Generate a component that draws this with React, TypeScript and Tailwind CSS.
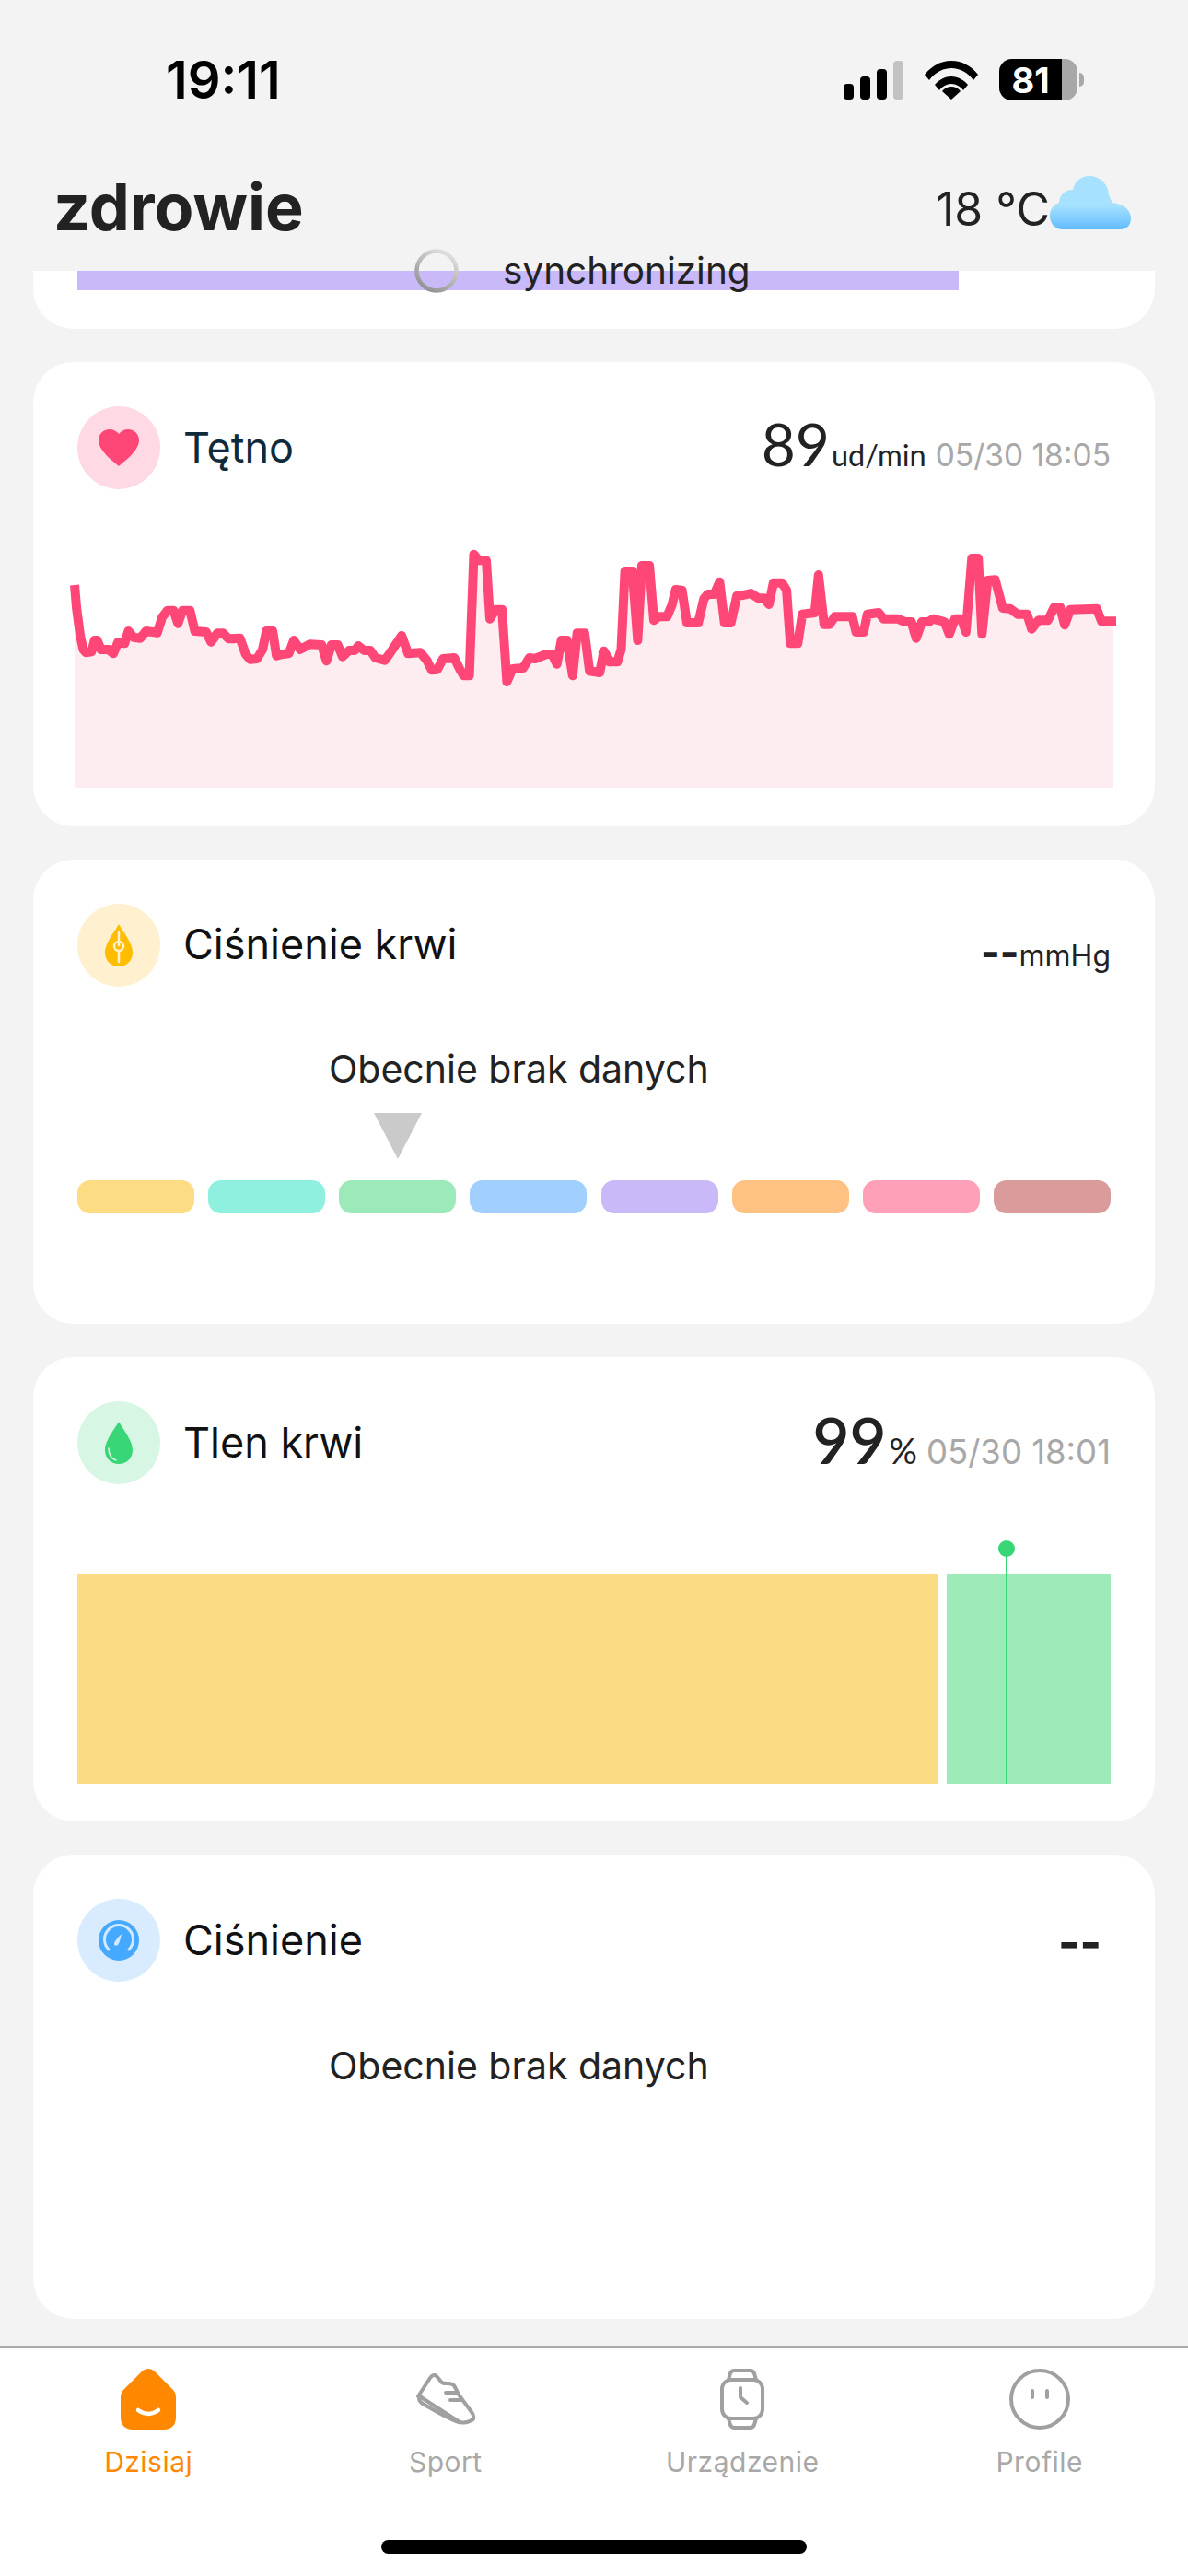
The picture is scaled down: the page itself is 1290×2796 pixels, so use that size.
import type { ReactNode } from "react";

// traced from the reference: left half, then right half of the heart rate line
const leftLine = [
  [125, 705], [130, 780], [140, 870], [148, 915], [155, 925], [170, 922], [178, 885], [185, 885], [195, 915], [215, 915],
  [228, 928], [240, 892], [258, 895], [268, 855], [282, 875], [300, 878], [315, 855], [345, 860], [358, 810], [372, 788],
  [388, 788], [400, 830], [412, 788], [432, 788], [445, 855], [475, 858], [488, 890], [505, 862], [520, 862], [535, 880],
  [565, 878], [580, 930], [592, 947], [610, 945], [625, 915], [635, 855], [652, 855], [662, 935], [680, 930], [695, 928],
  [708, 885], [725, 915], [750, 898], [782, 900], [795, 952], [808, 900], [825, 900], [838, 938], [855, 918], [870, 918],
  [880, 903], [895, 918], [912, 918], [925, 942], [950, 950], [965, 925], [995, 870], [1012, 928], [1045, 925], [1062, 950],
  [1075, 982], [1090, 980], [1105, 945], [1135, 942], [1150, 980], [1160, 1000], [1175, 1000], [1187, 605], [1200, 625],
  [1220, 625], [1230, 815], [1245, 785], [1262, 785], [1275, 1020], [1290, 978], [1318, 975], [1335, 942], [1350, 945],
  [1380, 930], [1395, 930], [1408, 962], [1420, 885], [1435, 885], [1450, 1000], [1462, 862], [1482, 862], [1495, 985],
  [1522, 990], [1533, 920], [1550, 955],
];
const rightLine = [
  [12, 925], [28, 955], [50, 955], [60, 915], [70, 660], [90, 660], [104, 885], [115, 642], [135, 642], [147, 820],
  [160, 808], [182, 808], [195, 770], [205, 720], [222, 722], [235, 828], [265, 828], [280, 750], [290, 735], [308, 735],
  [322, 695], [335, 828], [352, 828], [368, 740], [385, 738], [405, 732], [425, 748], [440, 748], [453, 768], [465, 698],
  [488, 698], [500, 722], [510, 895], [530, 895], [542, 800], [575, 795], [585, 672], [600, 833], [615, 833], [628, 808],
  [675, 808], [685, 858], [705, 858], [715, 800], [745, 795], [758, 815], [795, 815], [815, 825], [832, 825], [845, 878],
  [860, 825], [878, 825], [890, 815], [920, 825], [933, 865], [948, 815], [965, 815], [977, 858], [993, 618], [1010, 618],
  [1020, 865], [1035, 690], [1055, 688], [1075, 780], [1095, 782], [1115, 800], [1140, 800], [1152, 848], [1170, 820],
  [1195, 820], [1212, 778], [1228, 778], [1240, 835], [1255, 785], [1325, 782], [1338, 823], [1377, 823],
];

const linePoints = [
  ...leftLine.map(([x, y]) => [30 + x / 2.45 - 72, 400 + y / 3 - 590]),
  ...rightLine.map(([x, y]) => [650 + x / 2.45 - 72, 400 + y / 3 - 590]),
];
const lineAttr = linePoints.map(([x, y]) => `${x.toFixed(1)},${y.toFixed(1)}`).join(" ");
const fillAttr = `9,265 ${linePoints.map(([x, y]) => `${Math.min(x, 1137).toFixed(1)},${y.toFixed(1)}`).join(" ")} 1137,265`;

const pills = ["bg-[#fddc84]", "bg-[#90f0e0]", "bg-[#9ce9b9]", "bg-[#a1d0ff]", "bg-[#c9b9f9]", "bg-[#ffc282]", "bg-[#ffa0b9]", "bg-[#da9b9b]"];

function CardHead({ circle, icon, title, titleClass, children }: { circle: string; icon: ReactNode; title: string; titleClass?: string; children: ReactNode }) {
  return (
    <div className="flex h-[90px] items-start justify-between">
      <div className="flex h-[90px] items-center gap-[25px]">
        <div className={`flex h-[90px] w-[90px] items-center justify-center rounded-full ${circle}`}>{icon}</div>
        <span className={`text-[45px] ${titleClass ?? "text-[#111]"}`}>{title}</span>
      </div>
      {children}
    </div>
  );
}

function Card({ children }: { children: ReactNode }) {
  return <div className="h-[504px] shrink-0 rounded-[44px] bg-white px-12 pt-12">{children}</div>;
}

function NoData({ className }: { className: string }) {
  return <p className={`pl-[273px] text-[41px] leading-[50px] text-[#222] ${className}`}>Obecnie brak danych</p>;
}

function StatusIcons() {
  return (
    <div className="flex items-center">
      <svg width="66" height="42" viewBox="0 0 66 42" className="mt-[1px]">
        <rect x="0" y="25" width="11" height="17" rx="4" fill="#000" />
        <rect x="18" y="17" width="11" height="25" rx="4" fill="#000" />
        <rect x="36" y="9" width="11" height="33" rx="4" fill="#000" />
        <rect x="54" y="0" width="11" height="42" rx="4" fill="#c2c2c2" />
      </svg>
      <svg width="58" height="42" viewBox="0 0 58 42" className="ml-[22px]">
        <path d="M0 15C7 6 17 0 29 0s22 6 29 15l-5 6C47 13 38.500 8 29 8S11 13 5 21z" fill="#000" />
        <path d="M11 26c4-5 11-9 18-9s14 4 18 9l-5 6c-3-4-8-7-13-7s-10 3-13 7z" fill="#000" />
        <path d="M19 33c2-3 6-5 10-5s8 2 10 5L29 42z" fill="#000" />
      </svg>
      <div className="relative ml-[23px] flex h-[45px] w-[85px] overflow-hidden rounded-[14px] bg-[#a8a8a8]">
        <div className="flex w-[68px] items-center justify-center bg-black text-[38px] font-bold leading-none text-white">81</div>
      </div>
      <div className="ml-[2px] h-[15px] w-[5px] rounded-r-full bg-[#a8a8a8]" />
    </div>
  );
}

function Cloud() {
  return (
    <svg width="88" height="58" viewBox="0 0 88 58">
      <defs>
        <linearGradient id="cloud" x1="0" y1="0" x2="0" y2="1">
          <stop offset="0.55" stopColor="#a6e2ff" />
          <stop offset="1" stopColor="#62bbff" />
        </linearGradient>
      </defs>
      <path d="M14 58C5 58 0 51 0 43c0-7 4-12 10-14 0-7 5-14 15-14 2-9 9-15 18-15 11 0 20 8 21 20 2 6 3 7 4 9 9 1 20 6 20 17 0 7-4 12-12 12z" fill="url(#cloud)" />
    </svg>
  );
}

function Heart() {
  return (
    <svg width="44" height="40" viewBox="0 0 44 40">
      <path d="M22 40C19 37 0 24 0 12 0 5 5 0 12 0c4 0 8 2 10 5 2-3 6-5 10-5 7 0 12 5 12 12 0 12-19 25-22 28z" fill="#ff4777" />
    </svg>
  );
}

function PressureDrop() {
  return (
    <svg width="30" height="46" viewBox="0 0 30 46">
      <path d="M15 0c3 6 15 20 15 31 0 9-7 15-15 15S0 40 0 31C0 20 12 6 15 0z" fill="#ffbd00" />
      <path d="M15 9v14M15 30v11" stroke="#fff0cf" strokeWidth="2.500" strokeLinecap="round" />
      <circle cx="15" cy="24" r="5" fill="none" stroke="#fff0cf" strokeWidth="2.500" />
    </svg>
  );
}

function OxygenDrop() {
  return (
    <svg width="30" height="46" viewBox="0 0 30 46">
      <path d="M15 0c3 6 15 20 15 31 0 9-7 15-15 15S0 40 0 31C0 20 12 6 15 0z" fill="#38d677" />
      <path d="M4 29c0 6 3 11 8 13" fill="none" stroke="#d9f6e5" strokeWidth="1.500" strokeLinecap="round" />
    </svg>
  );
}

function Gauge() {
  return (
    <svg width="44" height="44" viewBox="0 0 44 44">
      <circle cx="22" cy="22" r="22" fill="#45a9ff" />
      <path d="M11 32A15.500 15.500 0 1 1 33 32" fill="none" stroke="#d3e9ff" strokeWidth="3" strokeLinecap="round" />
      <path d="M17 26c0-3 5-8 8-11-1 4-2 10-4 12-2 1-4 1-4-1z" fill="#d3e9ff" />
    </svg>
  );
}

function HomeIcon() {
  return (
    <svg width="60" height="66" viewBox="0 0 60 66">
      <path d="M23 3c4-4 10-4 14 0l19 19c3 3 4 5 4 9v22c0 8-5 13-13 13H13C5 66 0 61 0 53V31c0-4 1-6 4-9z" fill="#ff8800" />
      <path d="M19 45c7 5 15 5 22 0" fill="none" stroke="#fff" strokeWidth="4.500" strokeLinecap="round" />
    </svg>
  );
}

function ShoeIcon() {
  return (
    <svg width="66" height="57" viewBox="0 0 66 57" fill="none" stroke="#a0a0a0" strokeWidth="4" strokeLinecap="round" strokeLinejoin="round">
      <path d="M3 25 16 5c2-3 5-4 7-2l5 6c1 2 3 2 7 2 5 0 7 1 8 4l4 8 14 19c3 4 3 8 0 9-5 3-11 3-17 1-12-5-24-12-36-19-3-2-5-5-3-8z" />
      <path d="M5 25c13 9 28 18 43 28" />
      <path d="M33 21h12M38 29h12" />
    </svg>
  );
}

function WatchIcon() {
  return (
    <svg width="48" height="66" viewBox="0 0 48 66" fill="none" stroke="#a0a0a0" strokeWidth="4" strokeLinecap="round" strokeLinejoin="round">
      <rect x="2" y="12" width="44" height="42" rx="10" />
      <path d="M9 12l2-7c1-2 2-3 4-3h18c2 0 3 1 4 3l2 7M9 54l2 7c1 2 2 3 4 3h18c2 0 3-1 4-3l2-7" />
      <path d="M22 21v10l7 6" />
    </svg>
  );
}

function FaceIcon() {
  return (
    <svg width="66" height="66" viewBox="0 0 66 66" fill="none" stroke="#a0a0a0" strokeLinecap="round">
      <circle cx="33" cy="33" r="31" strokeWidth="4" />
      <path d="M25 24v7M41 24v7" strokeWidth="4" />
    </svg>
  );
}

function Tab({ icon, label, active }: { icon: ReactNode; label: string; active?: boolean }) {
  return (
    <div className="flex flex-col items-center">
      <div className="flex h-[66px] items-center">{icon}</div>
      <span className={`mt-[17px] text-[30px] leading-[36px] tracking-[0.5px] ${active ? "text-[#ff8800]" : "text-[#a8a8a8]"}`}>{label}</span>
    </div>
  );
}

export default function App() {
  return (
    <div className="relative flex h-[2796px] w-[1290px] flex-col overflow-hidden bg-[#f3f3f3] font-['Inter',sans-serif]">
      <div className="flex h-[180px] shrink-0 items-start justify-between pt-[64px] pl-[180px] pr-[113px]">
        <span className="text-[56px] font-semibold leading-[46px] text-black">19:11</span>
        <StatusIcons />
      </div>

      <div className="flex h-[114px] shrink-0 items-start justify-between pl-[58px] pr-[62px]">
        <h1 className="mt-[5px] text-[70px] font-bold leading-[80px] text-[#222]">zdrowie</h1>
        <div className="mt-[11px] flex items-start">
          <span className="mt-[6px] text-[50px] leading-[60px] text-[#222]">18 °C</span>
          <Cloud />
        </div>
      </div>

      <div className="relative flex flex-1 flex-col gap-9 px-9">
        <div className="h-[63px] shrink-0 rounded-b-[44px] bg-white px-12">
          <div className="h-[21px] w-[957px] bg-[#c9b9f9]" />
        </div>

        <Card>
          <CardHead circle="bg-[#ffd9e3]" icon={<Heart />} title="Tętno" titleClass="text-[#0f2a3a]">
            <div className="mt-[6px] flex items-baseline font-['Lato',sans-serif]">
              <span className="text-[64px] leading-[70px] text-[#222]">89</span>
              <span className="ml-[2px] text-[32.500px] text-[#222]">ud/min</span>
              <span className="ml-[10px] font-['Inter',sans-serif] text-[33.500px] text-[#a8a8a8]">05/30 18:05</span>
            </div>
          </CardHead>
          <svg width="1146" height="280" viewBox="0 0 1146 280" className="-ml-[12px] mt-[59px] block overflow-visible">
            <polygon points={fillAttr} fill="#fdecf0" />
            <polyline points={lineAttr} fill="none" stroke="#ff4777" strokeWidth="10" strokeLinejoin="round" />
          </svg>
        </Card>

        <Card>
          <CardHead circle="bg-[#fff0cf]" icon={<PressureDrop />} title="Ciśnienie krwi" titleClass="-mt-[3px] text-[#111]">
            <div className="mt-[24px] flex items-baseline">
              <span className="text-[44px] font-extrabold leading-[56px] text-[#222]">--</span>
              <span className="text-[32px] text-[#222]">mmHg</span>
            </div>
          </CardHead>
          <NoData className="mt-[64px]" />
          <svg width="52" height="50" viewBox="0 0 52 50" className="ml-[322px] mt-[23px] block">
            <polygon points="0,0 52,0 26,50" fill="#cacaca" />
          </svg>
          <div className="mt-[23px] flex justify-between">
            {pills.map((color) => (
              <div key={color} className={`h-9 w-[127px] rounded-[14px] ${color}`} />
            ))}
          </div>
        </Card>

        <Card>
          <CardHead circle="bg-[#d8f6e4]" icon={<OxygenDrop />} title="Tlen krwi">
            <div className="-mt-[3px] flex items-baseline font-['Lato',sans-serif]">
              <span className="text-[69px] font-semibold leading-[90px] text-[#222]">99</span>
              <span className="ml-[3px] text-[38px] text-[#222]">%</span>
              <span className="ml-[10px] font-['Inter',sans-serif] text-[36.500px] text-[#a8a8a8]">05/30 18:01</span>
            </div>
          </CardHead>
          <div className="relative mt-[97px] flex h-[228px] gap-[9px]">
            <div className="w-[935px] bg-[#fcdc82]" />
            <div className="flex-1 bg-[#9cebb9]" />
            <div className="absolute bottom-0 left-[1008px] h-[248px] w-[2px] bg-[#38d677]" />
            <div className="absolute left-[1000px] top-[-36px] h-[18px] w-[18px] rounded-full bg-[#38d677]" />
          </div>
        </Card>

        <Card>
          <CardHead circle="bg-[#d9ecff]" icon={<Gauge />} title="Ciśnienie">
            <span className="mr-[10px] mt-[19px] text-[50px] font-extrabold leading-[56px] text-[#222]">--</span>
          </CardHead>
          <NoData className="mt-[66px]" />
        </Card>

        <div className="absolute left-[450px] top-[-24px] flex items-center">
          <svg width="48" height="48" viewBox="0 0 48 48">
            <defs>
              <linearGradient id="spin" x1="0.8" y1="0" x2="0.2" y2="1">
                <stop offset="0" stopColor="#e2e2e2" />
                <stop offset="1" stopColor="#8f8f8f" />
              </linearGradient>
            </defs>
            <circle cx="24" cy="24" r="21.500" fill="none" stroke="url(#spin)" strokeWidth="4.500" />
          </svg>
          <span className="ml-[48px] text-[40.500px] leading-[48px] text-[#222]">synchronizing</span>
        </div>
      </div>

      <div className="relative h-[250px] shrink-0 border-t-2 border-[#aaa] bg-white">
        <div className="grid grid-cols-4 pt-[23px]">
          <Tab icon={<HomeIcon />} label="Dzisiaj" active />
          <Tab icon={<ShoeIcon />} label="Sport" />
          <Tab icon={<WatchIcon />} label="Urządzenie" />
          <Tab icon={<FaceIcon />} label="Profile" />
        </div>
        <div className="absolute bottom-[24px] left-[414px] h-[15px] w-[462px] rounded-full bg-black" />
      </div>
    </div>
  );
}
